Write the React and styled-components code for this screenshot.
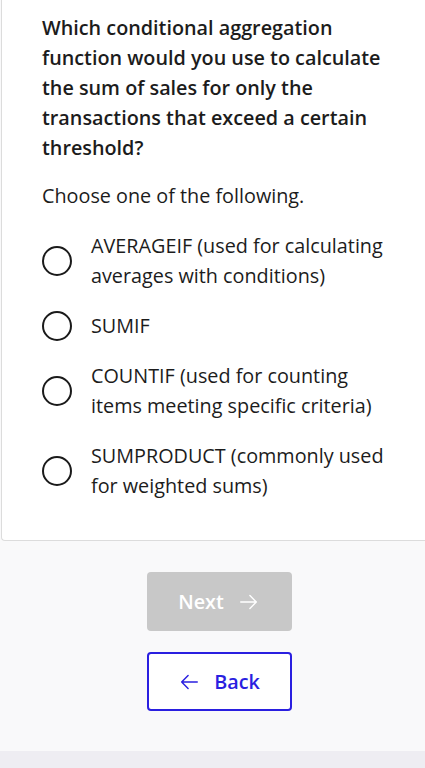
import styled, { createGlobalStyle } from "styled-components";

const options = [
  "AVERAGEIF (used for calculating averages with conditions)",
  "SUMIF",
  "COUNTIF (used for counting items meeting specific criteria)",
  "SUMPRODUCT (commonly used for weighted sums)",
];

export default function App() {
  return (
    <>
      <GlobalStyle />
      <Page>
        <Card>
          <Question>
            Which conditional aggregation function would you use to calculate
            the sum of sales for only the transactions that exceed a certain
            threshold?
          </Question>
          <Hint>Choose one of the following.</Hint>
          <OptionList>
            {options.map((text) => (
              <Option key={text}>
                <Radio />
                <OptionText>{text}</OptionText>
              </Option>
            ))}
          </OptionList>
        </Card>
        <Actions>
          <NextButton disabled>
            Next
            <svg width="22" height="22" viewBox="0 0 24 24" fill="none" stroke="currentColor" strokeWidth="1.6" strokeLinecap="round" strokeLinejoin="round">
              <path d="M3 12h17M13 5l7 7-7 7" />
            </svg>
          </NextButton>
          <BackButton>
            <svg width="22" height="22" viewBox="0 0 24 24" fill="none" stroke="currentColor" strokeWidth="1.6" strokeLinecap="round" strokeLinejoin="round">
              <path d="M21 12H4M11 5l-7 7 7 7" />
            </svg>
            Back
          </BackButton>
        </Actions>
        <Footer />
      </Page>
    </>
  );
}

const GlobalStyle = createGlobalStyle`
  html, body {
    margin: 0;
    padding: 0;
    background: #f9f9fa;
    font-family: "Open Sans", "Liberation Sans", sans-serif;
  }
`;

const Page = styled.div`
  min-height: 768px;
  display: flex;
  flex-direction: column;
`;

const Card = styled.div`
  margin-left: 1px;
  background: #fff;
  border-left: 1px solid #dcdcdc;
  border-bottom: 1px solid #dcdcdc;
  border-bottom-left-radius: 4px;
  padding: 13px 32px 39px 40px;
`;

const Question = styled.p`
  margin: 0;
  font-size: 19.8px;
  font-weight: 600;
  line-height: 30px;
  color: #1c1c1c;
`;

const Hint = styled.p`
  margin: 18px 0 0;
  font-size: 19.8px;
  line-height: 30px;
  color: #1c1c1c;
`;

const OptionList = styled.div`
  margin-top: 20px;
  display: flex;
  flex-direction: column;
  gap: 20px;
`;

const Option = styled.label`
  display: flex;
  align-items: center;
  gap: 19px;
`;

const Radio = styled.span`
  flex: none;
  width: 26px;
  height: 26px;
  border: 2px solid #1a1a1a;
  border-radius: 50%;
`;

const OptionText = styled.span`
  font-size: 19.8px;
  line-height: 30px;
  color: #1c1c1c;
`;

const Actions = styled.div`
  display: flex;
  flex-direction: column;
  align-items: center;
  gap: 21px;
  padding: 31px 0 40px 13px;
`;

const BaseButton = styled.button`
  box-sizing: border-box;
  width: 145px;
  height: 59px;
  border-radius: 4px;
  display: flex;
  align-items: center;
  justify-content: center;
  gap: 14px;
  font-family: "Open Sans", "Liberation Sans", sans-serif;
  font-size: 19.8px;
  font-weight: 600;
`;

const NextButton = styled(BaseButton)`
  background: #c8c8c8;
  border: none;
  color: #fff;
`;

const BackButton = styled(BaseButton)`
  background: #fff;
  border: 2px solid #2a1fe0;
  color: #2a1fe0;
`;

const Footer = styled.div`
  flex: 1;
  background: #eeedf2;
`;
